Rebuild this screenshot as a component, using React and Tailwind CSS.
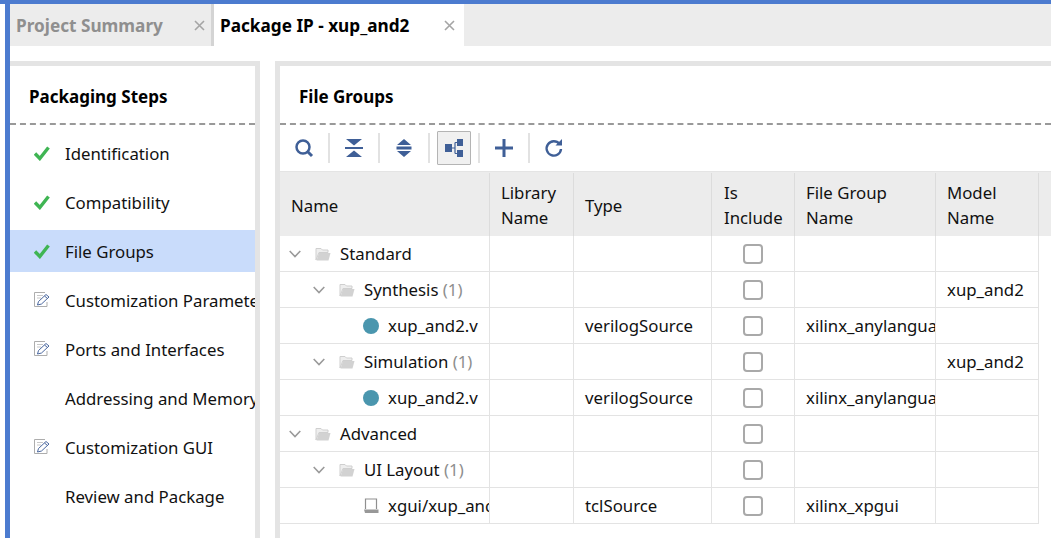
import React from "react";

const BLUE = "#3f5f97";

function Check() {
  return (
    <svg width="16" height="15" viewBox="0 0 16 15" className="shrink-0">
      <path d="M1 7.5 L5.8 12.5 L14.5 1.5" fill="none" stroke="#3fb553" strokeWidth="3.4" />
    </svg>
  );
}

function EditNote() {
  return (
    <svg width="16" height="16" viewBox="0 0 16 16" className="shrink-0">
      <path d="M11 .5 H.5 V14.5 H13 V10" fill="none" stroke="#adadad" strokeWidth="1" />
      <path d="M3 3.5 H9 M3 6 H7" stroke="#c8c8c8" strokeWidth="1" />
      <path d="M3.5 13 L4.5 9.5 L12 2.5 L15 5 L7.5 12 Z M10.5 4 L13.5 6.5" fill="#fff" stroke="#4a679f" strokeWidth="1" />
    </svg>
  );
}

function Close() {
  return (
    <svg width="11" height="11" viewBox="0 0 11 11" className="shrink-0">
      <path d="M1 1 L10 10 M10 1 L1 10" stroke="#a5a5a5" strokeWidth="1.6" />
    </svg>
  );
}

function Chevron() {
  return (
    <svg width="12" height="8" viewBox="0 0 12 8" className="shrink-0">
      <path d="M.7 1 L6 6.5 L11.3 1" fill="none" stroke="#9a9a9a" strokeWidth="1.6" />
    </svg>
  );
}

function Folder() {
  return (
    <svg width="16" height="14" viewBox="0 0 16 14" className="ml-[14px] mr-[9px] shrink-0">
      <path d="M1 13 V1.5 H6 L7.5 3 H13 V5.5 H4 Z" fill="#eeeeee" stroke="#cfcfcf" strokeWidth="1" />
      <path d="M1.5 13.5 L4 6 H15.5 L13.5 13.5 Z" fill="#d2d2d2" />
    </svg>
  );
}

function Dot() {
  return <span className="mr-[9px] h-4 w-4 shrink-0 rounded-full bg-[#4a96ae]" />;
}

function LayoutFile() {
  return (
    <svg width="16" height="16" viewBox="0 0 16 16" className="mr-[9px] shrink-0">
      <path d="M2.5 11 V1 H13.5 V11" fill="none" stroke="#8f8f8f" strokeWidth="1.2" />
      <path d="M1 11.5 H15.5 V15 H2 Z" fill="#989898" />
    </svg>
  );
}

function ToolIcon({ children, active }) {
  return (
    <div
      className={
        active
          ? "flex h-[34px] w-[34px] items-center justify-center rounded-[1px] border border-[#b4b4b4] bg-[#f0f0f0]"
          : "flex h-[34px] w-[34px] items-center justify-center"
      }
    >
      <svg width="22" height="22" viewBox="0 0 22 22" fill={BLUE}>
        {children}
      </svg>
    </div>
  );
}

function Sep() {
  return <div className="h-[30px] w-[2px] bg-[#e2e2e2]" />;
}

const steps = [
  { label: "Identification", icon: "check" },
  { label: "Compatibility", icon: "check" },
  { label: "File Groups", icon: "check", selected: true },
  { label: "Customization Parameters", icon: "edit" },
  { label: "Ports and Interfaces", icon: "edit" },
  { label: "Addressing and Memory" },
  { label: "Customization GUI", icon: "edit" },
  { label: "Review and Package" },
];

const rows = [
  { name: "Standard", pad: "pl-[9px]", kind: "group" },
  { name: "Synthesis", count: "(1)", pad: "pl-[33px]", kind: "group", model: "xup_and2" },
  { name: "xup_and2.v", pad: "pl-[83px]", kind: "dot", type: "verilogSource", group: "xilinx_anylanguagesynthesis" },
  { name: "Simulation", count: "(1)", pad: "pl-[33px]", kind: "group", model: "xup_and2" },
  { name: "xup_and2.v", pad: "pl-[83px]", kind: "dot", type: "verilogSource", group: "xilinx_anylanguagebehavioral" },
  { name: "Advanced", pad: "pl-[9px]", kind: "group" },
  { name: "UI Layout", count: "(1)", pad: "pl-[33px]", kind: "group" },
  { name: "xgui/xup_and2_v1_0.tcl", pad: "pl-[83px]", kind: "file", type: "tclSource", group: "xilinx_xpgui" },
];

const gridCols = "grid grid-cols-[210px_84px_138px_83px_141px_103px_1fr]";
const headCell = "flex h-full items-center border-r border-[#dcdcdc] pl-[11px] leading-[25px]";
const cell = "flex h-full items-center overflow-hidden whitespace-nowrap border-b border-r border-[#e3e3e3]";

export default function App() {
  return (
    <div className="h-[538px] w-[1051px] overflow-hidden bg-white text-[16.8px] text-[#111] font-['Noto_Sans',sans-serif]">
      <div className="h-[4px] bg-[#4c7bcf]" />
      <div className="flex h-[534px] pl-[5px]">
        <div className="flex w-[1046px] flex-col border-l-[5px] border-[#4c7bcf]">
          <div className="flex h-[42px] shrink-0 bg-[#ececec] text-[17.2px]">
            <div className="flex w-[204px] items-center justify-between border-r-[3px] border-[#d4d4d4] pl-[6px] pr-[6px]">
              <span className="pt-[1px] font-bold text-[#8f8f8f]">Project Summary</span>
              <Close />
            </div>
            <div className="flex w-[250px] items-center justify-between bg-white pl-[6px] pr-[9px]">
              <span className="pt-[1px] font-bold text-black">Package IP - xup_and2</span>
              <Close />
            </div>
          </div>

          <div className="mt-[15px] flex min-h-0 flex-1">
            <aside className="w-[250px] shrink-0 border-r-[5px] border-t-[5px] border-[#e4e4e4]">
              <div className="flex h-[59px] items-center border-b-2 border-dashed border-[#999] pl-[19px] pt-[5px] text-[17px] font-bold text-black">
                Packaging Steps
              </div>
              <div className="mt-[7px] flex flex-col gap-[7px]">
                {steps.map((s) => (
                  <div
                    key={s.label}
                    className={`flex h-[42px] items-center overflow-hidden whitespace-nowrap ${s.selected ? "bg-[#c9dcfb]" : ""}`}
                  >
                    <div className="flex w-[55px] shrink-0 justify-end pr-[15px]">
                      {s.icon === "check" && <Check />}
                      {s.icon === "edit" && <EditNote />}
                    </div>
                    <span className="pt-[1px]">{s.label}</span>
                  </div>
                ))}
              </div>
            </aside>

            <main className="ml-[15px] min-w-0 flex-1 border-l-[5px] border-t-[5px] border-[#e4e4e4]">
              <div className="flex h-[59px] items-center border-b-2 border-dashed border-[#999] pl-[19px] pt-[5px] text-[17px] font-bold text-black">
                File Groups
              </div>
              <div className="flex h-[46px] items-center gap-[7px] pl-[7px]">
                <ToolIcon>
                  <circle cx="10" cy="10" r="6.5" fill="none" stroke={BLUE} strokeWidth="2.5" />
                  <path d="M15 15 L19 19" stroke={BLUE} strokeWidth="3" />
                </ToolIcon>
                <Sep />
                <ToolIcon>
                  <path d="M3 2 H19 L11 8.5 Z M3 20 H19 L11 13.5 Z" />
                  <rect x="2" y="10" width="18" height="2" />
                </ToolIcon>
                <Sep />
                <ToolIcon>
                  <path d="M11 2 L18 8 H4 Z M11 20 L18 14 H4 Z" />
                  <rect x="3.5" y="9.5" width="15" height="3" />
                </ToolIcon>
                <Sep />
                <ToolIcon active>
                  <rect x="2" y="7" width="7" height="8" />
                  <rect x="14" y="2" width="6" height="7" />
                  <rect x="14" y="13" width="6" height="7" />
                  <path d="M9 11 H12 M12 5.5 V16.5 M12 5.5 H14 M12 16.5 H14" fill="none" stroke={BLUE} strokeWidth="1.2" />
                </ToolIcon>
                <Sep />
                <ToolIcon>
                  <path d="M9.5 2 H12.5 V9.5 H20 V12.5 H12.5 V20 H9.5 V12.5 H2 V9.5 H9.5 Z" />
                </ToolIcon>
                <Sep />
                <ToolIcon>
                  <path d="M16.5 7 A7.2 7.2 0 1 0 18 12" fill="none" stroke={BLUE} strokeWidth="2.4" />
                  <path d="M12.5 8.5 H19 V2 Z" />
                </ToolIcon>
              </div>

              <div className={`${gridCols} h-[65px] border-t-[1px] border-[#e4e4e4] bg-[#ececec] pt-[1px]`}>
                <div className={headCell}><span className="pt-[1px]">Name</span></div>
                <div className={headCell}>Library<br />Name</div>
                <div className={headCell}><span className="pt-[1px]">Type</span></div>
                <div className={`${headCell} !pl-[12px]`}>Is<br />Include</div>
                <div className={headCell}>File Group<br />Name</div>
                <div className={headCell}>Model<br />Name</div>
                <div />
              </div>

              {rows.map((r, i) => (
                <div key={i} className={`${gridCols} h-[36px]`}>
                  <div className={`${cell} ${r.pad}`}>
                    {r.kind === "group" && <Chevron />}
                    {r.kind === "group" && <Folder />}
                    {r.kind === "dot" && <Dot />}
                    {r.kind === "file" && <LayoutFile />}
                    <span>
                      {r.name}
                      {r.count && <span className="text-[#8e8e8e]"> {r.count}</span>}
                    </span>
                  </div>
                  <div className={`${cell} pl-[11px]`} />
                  <div className={`${cell} pl-[11px]`}>{r.type}</div>
                  <div className={`${cell} justify-center`}>
                    <span className="h-[20px] w-[20px] rounded-[4px] border-2 border-[#a9a9a9] bg-white" />
                  </div>
                  <div className={`${cell} pl-[11px]`}>{r.group}</div>
                  <div className={`${cell} pl-[11px]`}>{r.model}</div>
                  <div />
                </div>
              ))}
            </main>
          </div>
        </div>
      </div>
    </div>
  );
}
